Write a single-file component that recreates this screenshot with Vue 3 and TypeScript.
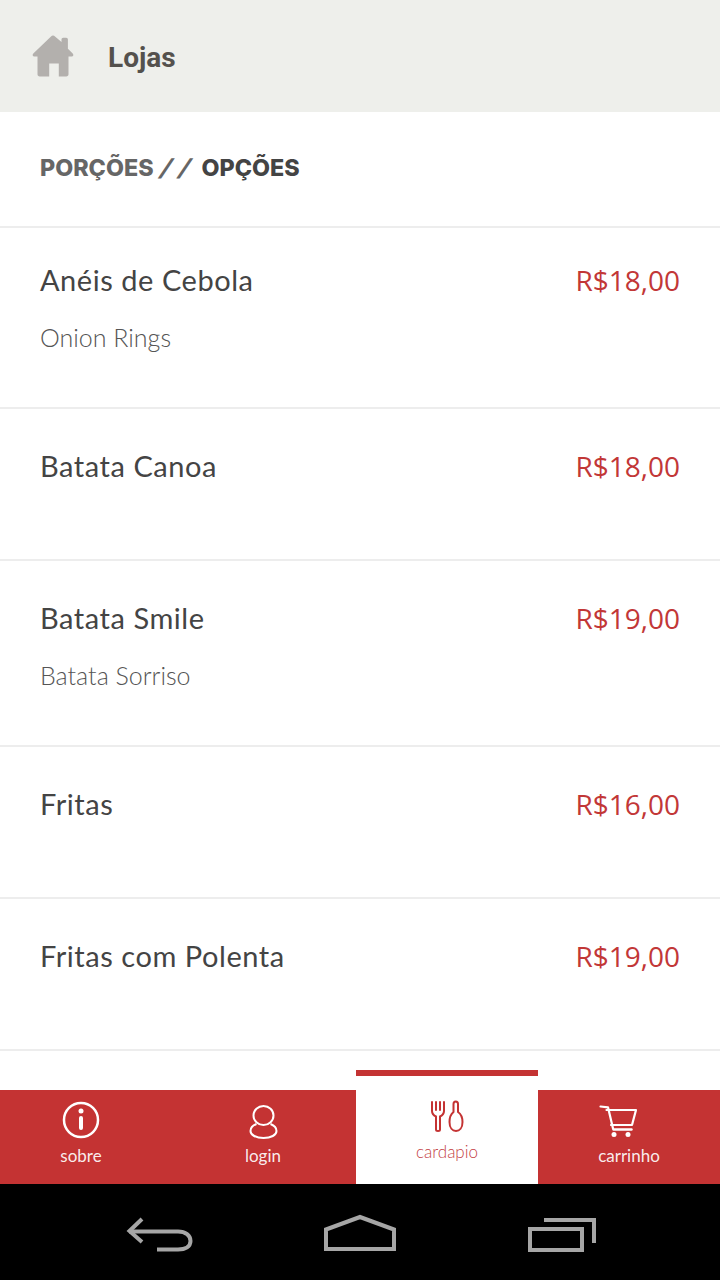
<script setup lang="ts">
interface Item { name: string; desc?: string; price: string }
const items: Item[] = [
  { name: 'Anéis de Cebola', desc: 'Onion Rings', price: 'R$18,00' },
  { name: 'Batata Canoa', price: 'R$18,00' },
  { name: 'Batata Smile', desc: 'Batata Sorriso', price: 'R$19,00' },
  { name: 'Fritas', price: 'R$16,00' },
  { name: 'Fritas com Polenta', price: 'R$19,00' },
]
</script>

<template>
  <div class="screen">
    <header class="top">
      <svg class="home" width="42" height="42" viewBox="0 0 42 42">
        <path fill="#b3b0ad" d="M21 0.5c.8 0 1.4.3 2 .9L29.500 7V4.500c0-1 .8-1.700 1.700-1.700h3c1 0 1.700.7 1.700 1.700v9.200l4.800 4.700c1.200 1.200.7 3-1 3h-3.200v17.900c0 1.300-.9 2.200-2.200 2.200h-7.500V28.400h-9.600v13.100H7.700c-1.300 0-2.200-.9-2.200-2.200V21.400H2.300c-1.700 0-2.200-1.800-1-3L19 1.400c.6-.6 1.200-.9 2-.9z"/>
      </svg>
      <span class="top-title">Lojas</span>
    </header>

    <main class="content">
      <h1 class="section"><span class="muted">PORÇÕES</span><span class="muted slashes">//</span><span>OPÇÕES</span></h1>
      <ul class="list">
        <li v-for="(item, i) in items" :key="item.name" class="row" :class="{ first: i === 0, tall: !!item.desc }">
          <div class="line">
            <span class="name">{{ item.name }}</span>
            <span class="price">{{ item.price }}</span>
          </div>
          <div v-if="item.desc" class="desc">{{ item.desc }}</div>
        </li>
      </ul>
    </main>

    <nav class="tabs">
      <a class="tab shift">
        <svg width="38" height="38" viewBox="0 0 38 38" fill="none" stroke="#fff">
          <circle cx="19" cy="19" r="17" stroke-width="2.500"/>
          <circle cx="19" cy="10" r="2.500" fill="#fff" stroke="none"/>
          <rect x="17" y="15" width="4" height="14" rx="2" fill="#fff" stroke="none"/>
        </svg>
        <span>sobre</span>
      </a>
      <a class="tab shift">
        <svg width="38" height="38" viewBox="0 0 38 38" fill="none" stroke="#fff" stroke-width="2">
          <ellipse cx="19.500" cy="14.500" rx="10" ry="9.500"/>
          <path d="M12.500 23C8.500 24.500 6.500 27 6.500 30c0 4 5.500 7 13 7s13-3 13-7c0-3-2-5.500-6-7"/>
        </svg>
        <span>login</span>
      </a>
      <a class="tab active">
        <svg width="38" height="38" viewBox="0 0 38 38" fill="none" stroke="#c43333" stroke-width="2" stroke-linejoin="round" stroke-linecap="round">
          <path d="M4 6v9c0 3 2 4.500 4 5.500v13c0 2 4 2 4 0v-13c2-1 4-2.500 4-5.500V6"/>
          <path d="M8 6v8M12 6v8"/>
          <path d="M25.500 8c0-3.500 4.500-3.500 4.500 0v8c3 2 4.500 5 4.500 10 0 6-3 9-6.500 9s-6.500-3-6.500-9c0-5 1.500-8 4-10z"/>
        </svg>
        <span>cardapio</span>
      </a>
      <a class="tab">
        <svg class="cart" width="38" height="38" viewBox="0 0 38 38" fill="none" stroke="#fff" stroke-width="2.200" stroke-linejoin="round" stroke-linecap="round">
          <path d="M1.500 5.500l7.500 .8L14 27.500"/>
          <path d="M7.500 9H37l-4 15H12"/>
          <path d="M14.500 28.500h18" stroke-width="2.400"/>
          <circle cx="15" cy="33.500" r="2.500" fill="#fff" stroke="none"/>
          <circle cx="29" cy="33.500" r="2.500" fill="#fff" stroke="none"/>
        </svg>
        <span>carrinho</span>
      </a>
    </nav>

    <footer class="android">
      <svg width="720" height="96" viewBox="0 0 720 96" fill="none" stroke="#a6a6a6" stroke-width="4">
        <path d="M142 35l-12.500 12 12.500 11"/>
        <path d="M129 47.500h49c7.500 0 12.500 4 12.500 9.500s-5 8.500-12.500 8.500h-21"/>
        <path d="M326 45.500L360 33l34 12.500V65h-68z"/>
        <rect x="530" y="45" width="52" height="21"/>
        <path d="M544 36h50v23"/>
      </svg>
    </footer>
  </div>
</template>

<style scoped>
.screen {
  width: 720px;
  height: 1280px;
  display: flex;
  flex-direction: column;
  overflow: hidden;
  background: #fff;
  font-family: "Lato", "Open Sans", sans-serif;
}
.top {
  height: 112px;
  flex: none;
  background: #eeefeb;
  display: flex;
  align-items: center;
  padding-left: 32px;
  box-sizing: border-box;
}
.home { margin-top: -1px; }
.top-title {
  margin-left: 34px;
  padding-top: 2px;
  font: 700 28px "Roboto", sans-serif;
  color: #54514d;
}
.content {
  flex: 1;
  min-height: 0;
  overflow: hidden;
}
.section {
  margin: 0;
  height: 116px;
  box-sizing: border-box;
  padding: 0 40px 4px;
  display: flex;
  align-items: center;
  white-space: pre;
  font-family: "Inter", sans-serif;
  font-size: 23.300px;
  font-weight: 800;
  color: #444;
  border-bottom: 2px solid #ededed;
}
.muted { color: #666; }
.slashes {
  display: inline-block;
  width: 34px;
  margin: 0 6px 0 8px;
  letter-spacing: 9px;
  transform: skewX(-22deg);
}
.list {
  list-style: none;
  margin: 0;
  padding: 0;
}
.row {
  box-sizing: border-box;
  height: 152px;
  padding: 33px 40px 0;
  border-bottom: 2px solid #ededed;
}
.row.tall { height: 186px; }
.row.first { height: 181px; padding-top: 28px; }
.line {
  display: flex;
  justify-content: space-between;
  align-items: center;
  height: 46px;
}
.name {
  font-size: 29px;
  letter-spacing: 0.55px;
  color: #444;
}
.price {
  padding-top: 1px;
  font: 400 28px "Open Sans", sans-serif;
  color: #c23737;
}
.desc {
  margin-top: 20px;
  font-size: 25px;
  font-weight: 300;
  color: #555;
}
.tabs {
  flex: none;
  height: 114px;
  margin-left: -8px;
  display: grid;
  grid-template-columns: repeat(4, 182px);
  align-items: end;
}
.tab {
  height: 94px;
  background: #c43333;
  color: rgba(255, 255, 255, 0.92);
  display: flex;
  flex-direction: column;
  align-items: center;
  padding-top: 11px;
  box-sizing: border-box;
  font-size: 17px;
  font-weight: 400;
  line-height: 20px;
}
.tab span { margin-top: 7px; }
.tab.shift { padding-right: 4px; }
.cart { margin-right: 22px; }
.tab.active {
  height: 114px;
  background: #fff;
  border-top: 6px solid #c43333;
  color: #c43f45;
  font-weight: 300;
  padding-top: 20px;
}
.tab.active span { margin-top: 8px; }
.android {
  flex: none;
  height: 96px;
  background: #000;
}
.android svg { display: block; }
</style>
